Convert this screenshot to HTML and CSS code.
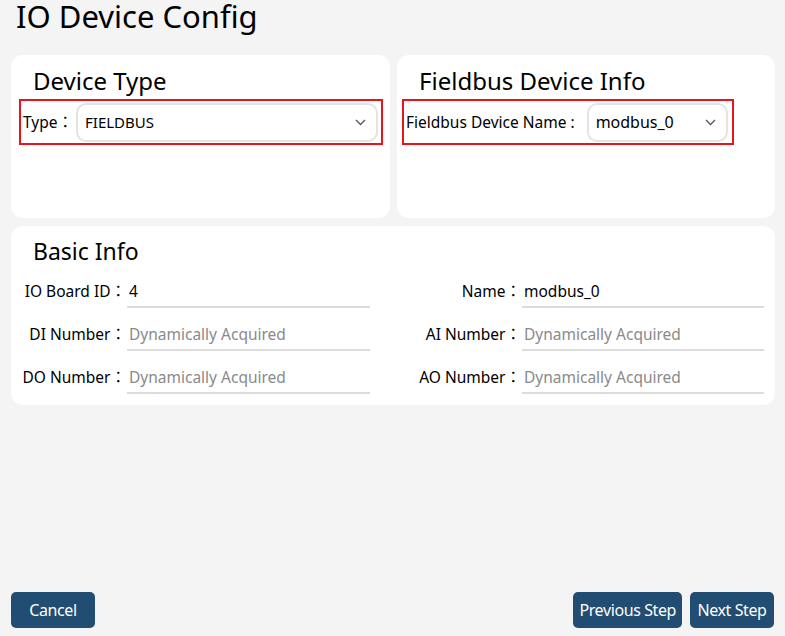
FILE: index.html
```html
<!DOCTYPE html>
<html lang="en">

<head>
  <meta charset="UTF-8">
  <meta name="viewport" content="width=device-width, initial-scale=1.0">
  <title>IO Device Config</title>
  <link rel="stylesheet" href="styles.css">
</head>

<body>
  <h1 class="page-title">IO Device Config</h1>

  <div class="top-row">
    <div class="card">
      <h2 class="card-title">Device Type</h2>
      <div class="mark-box type-box">
        <span class="field-label">Type<span class="colon">：</span></span>
        <div class="select type-select">
          <span>FIELDBUS</span>
          <svg class="chevron" width="11" height="7" viewBox="0 0 11 7">
            <path d="M1 1 L5.5 5.5 L10 1" fill="none" stroke="#555" stroke-width="1.3" />
          </svg>
        </div>
      </div>
    </div>

    <div class="card">
      <h2 class="card-title">Fieldbus Device Info</h2>
      <div class="mark-box bus-box">
        <span class="field-label">Fieldbus Device Name :</span>
        <div class="select bus-select">
          <span>modbus_0</span>
          <svg class="chevron" width="11" height="7" viewBox="0 0 11 7">
            <path d="M1 1 L5.5 5.5 L10 1" fill="none" stroke="#555" stroke-width="1.3" />
          </svg>
        </div>
      </div>
    </div>
  </div>

  <div class="card basic-card">
    <h2 class="card-title">Basic Info</h2>
    <div class="info-grid">
      <label class="info-label">IO Board ID<span class="colon">：</span></label>
      <div class="info-input">4</div>
      <label class="info-label">Name<span class="colon">：</span></label>
      <div class="info-input">modbus_0</div>

      <label class="info-label">DI Number<span class="colon">：</span></label>
      <div class="info-input empty">Dynamically Acquired</div>
      <label class="info-label">AI Number<span class="colon">：</span></label>
      <div class="info-input empty">Dynamically Acquired</div>

      <label class="info-label">DO Number<span class="colon">：</span></label>
      <div class="info-input empty">Dynamically Acquired</div>
      <label class="info-label">AO Number<span class="colon">：</span></label>
      <div class="info-input empty">Dynamically Acquired</div>
    </div>
  </div>

  <div class="footer">
    <button class="btn" type="button">Cancel</button>
    <div class="footer-right">
      <button class="btn" type="button">Previous Step</button>
      <button class="btn" type="button">Next Step</button>
    </div>
  </div>
</body>

</html>
```

FILE: styles.css
```css
body {
  margin: 0;
  padding: 0;
  height: 100vh;
  display: flex;
  flex-direction: column;
  font-family: "Noto Sans", "Noto Sans CJK JP", sans-serif;
  background-color: #f4f4f4;
  color: #000;
  box-sizing: border-box;
}

.page-title {
  margin: 0;
  padding: 1px 0 0 16px;
  font-size: 31px;
  font-weight: normal;
  line-height: 30px;
}

.top-row {
  display: grid;
  grid-template-columns: 379px 378px;
  gap: 7px;
  margin: 24px 0 0 11px;
}

.card {
  background-color: #fff;
  border-radius: 12px;
}

.top-row .card {
  height: 163px;
}

.card-title {
  margin: 11px 0 0 22px;
  font-size: 24px;
  font-weight: normal;
  line-height: 30px;
}

/* red highlight frame round the selects */
.mark-box {
  display: flex;
  align-items: center;
  border: 2px solid #e8141b;
  height: 42px;
  margin-top: 3px;
  box-sizing: content-box;
}

.type-box {
  width: 360px;
  margin-left: 8px;
}

.bus-box {
  width: 328px;
  margin-left: 5px;
}

.field-label {
  font-size: 15.5px;
  padding-left: 2px;
  white-space: nowrap;
}

.colon {
  font-family: "Noto Sans CJK JP", sans-serif;
  line-height: 0;
}

.select {
  display: flex;
  align-items: center;
  justify-content: space-between;
  height: 39px;
  box-sizing: border-box;
  border: 2px solid #e3e3e3;
  border-radius: 10px;
  padding: 0 10px 0 7px;
  font-size: 15px;
}

.type-select {
  width: 302px;
  margin-left: 3px;
}

.bus-select {
  width: 141px;
  margin-left: 12px;
  font-size: 16px;
}

.basic-card {
  margin: 8px 10px 0 11px;
  height: 179px;
}

.basic-card .card-title {
  margin: 10px 0 0 22px;
  font-size: 23px;
}

.info-grid {
  display: grid;
  grid-template-columns: 116px 243px 152px 242px;
  grid-auto-rows: 32px;
  row-gap: 11px;
  margin-top: 10px;
}

.info-label {
  text-align: right;
  font-size: 15.5px;
  line-height: 30px;
  padding-right: 1px;
  white-space: nowrap;
}

.info-input {
  font-size: 15.5px;
  line-height: 30px;
  padding-left: 2px;
  border-bottom: 2px solid #dcdcdc;
}

.info-input.empty {
  color: #8a8a8a;
}

.footer {
  margin-top: auto;
  display: flex;
  justify-content: space-between;
  padding: 0 11px 8px 11px;
}

.footer-right {
  display: flex;
  gap: 8px;
}

.btn {
  height: 36px;
  padding: 0 6px;
  min-width: 84px;
  border: none;
  border-radius: 5px;
  background-color: #224d72;
  color: #fff;
  font-family: "Noto Sans", sans-serif;
  font-size: 16px;
  letter-spacing: -0.4px;
  cursor: pointer;
}
```
